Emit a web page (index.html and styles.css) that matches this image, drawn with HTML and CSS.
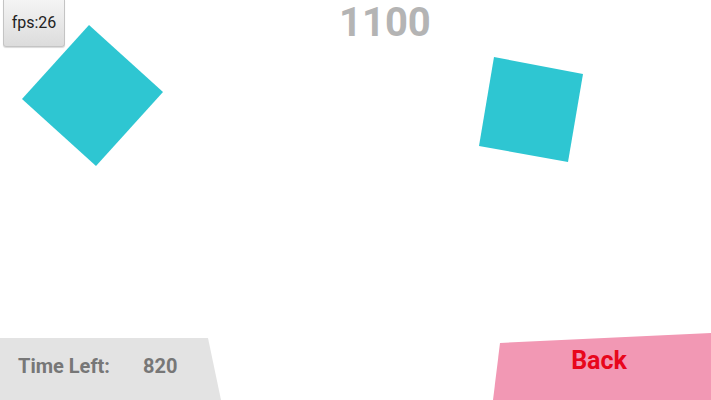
FILE: index.html
```html
<!DOCTYPE html>
<html>
<head>
<meta charset="utf-8">
<link rel="stylesheet" href="styles.css">
</head>
<body>
<div class="stage">
  <svg class="canvas" width="711" height="400" viewBox="0 0 711 400">
    <polygon class="tile" points="89,25 163,92 96,166 22,99"/>
    <polygon class="tile" points="494,57 583,74 568,162 479,146"/>
  </svg>
  <button class="fps">fps:26</button>
  <div class="score">1100</div>
  <div class="time-panel">
    <span class="time-label">Time Left:</span>
    <span class="time-value">820</span>
  </div>
  <div class="back-panel"><span class="back-label">Back</span></div>
</div>
</body>
</html>
```
FILE: styles.css
```css
html, body {
  margin: 0;
  padding: 0;
  background: #ffffff;
}
.stage {
  position: relative;
  width: 711px;
  height: 400px;
  overflow: hidden;
  font-family: Roboto, "Liberation Sans", sans-serif;
}
.canvas {
  position: absolute;
  left: 0;
  top: 0;
}
.tile {
  fill: #2ec6d2;
}
.fps {
  position: absolute;
  left: 3px;
  top: 0;
  width: 62px;
  height: 47px;
  box-sizing: border-box;
  border: 1px solid #c4c4c4;
  border-top: none;
  border-radius: 0 0 3px 3px;
  background: linear-gradient(#f4f4f4, #dcdcdc);
  box-shadow: 0 1px 1px rgba(0,0,0,0.15);
  font-family: Roboto, "Liberation Sans", sans-serif;
  font-size: 16px;
  color: #222;
  padding: 0 0 2px 0;
}
.score {
  position: absolute;
  left: 339px;
  top: 0;
  font-size: 40px;
  font-weight: 700;
  color: #b4b4b4;
  line-height: 46px;
}
.time-panel {
  position: absolute;
  left: 0;
  bottom: 0;
  width: 221px;
  height: 62px;
  background: #e3e3e3;
  clip-path: polygon(0 0, 208px 0, 100% 100%, 0 100%);
  display: flex;
  align-items: center;
  padding-left: 18px;
  padding-bottom: 6px;
  box-sizing: border-box;
  font-size: 20px;
  font-weight: 700;
  color: #777777;
}
.time-value {
  margin-left: 33px;
}
.back-panel {
  position: absolute;
  right: 0;
  bottom: 0;
  width: 218px;
  height: 67px;
  background: #f298b4;
  clip-path: polygon(7px 10px, 100% 0, 100% 100%, 0 100%);
  display: flex;
  justify-content: center;
  padding-right: 6px;
  padding-top: 13px;
  box-sizing: border-box;
}
.back-label {
  font-size: 25px;
  font-weight: 700;
  color: #e8061c;
  line-height: 30px;
}
```
